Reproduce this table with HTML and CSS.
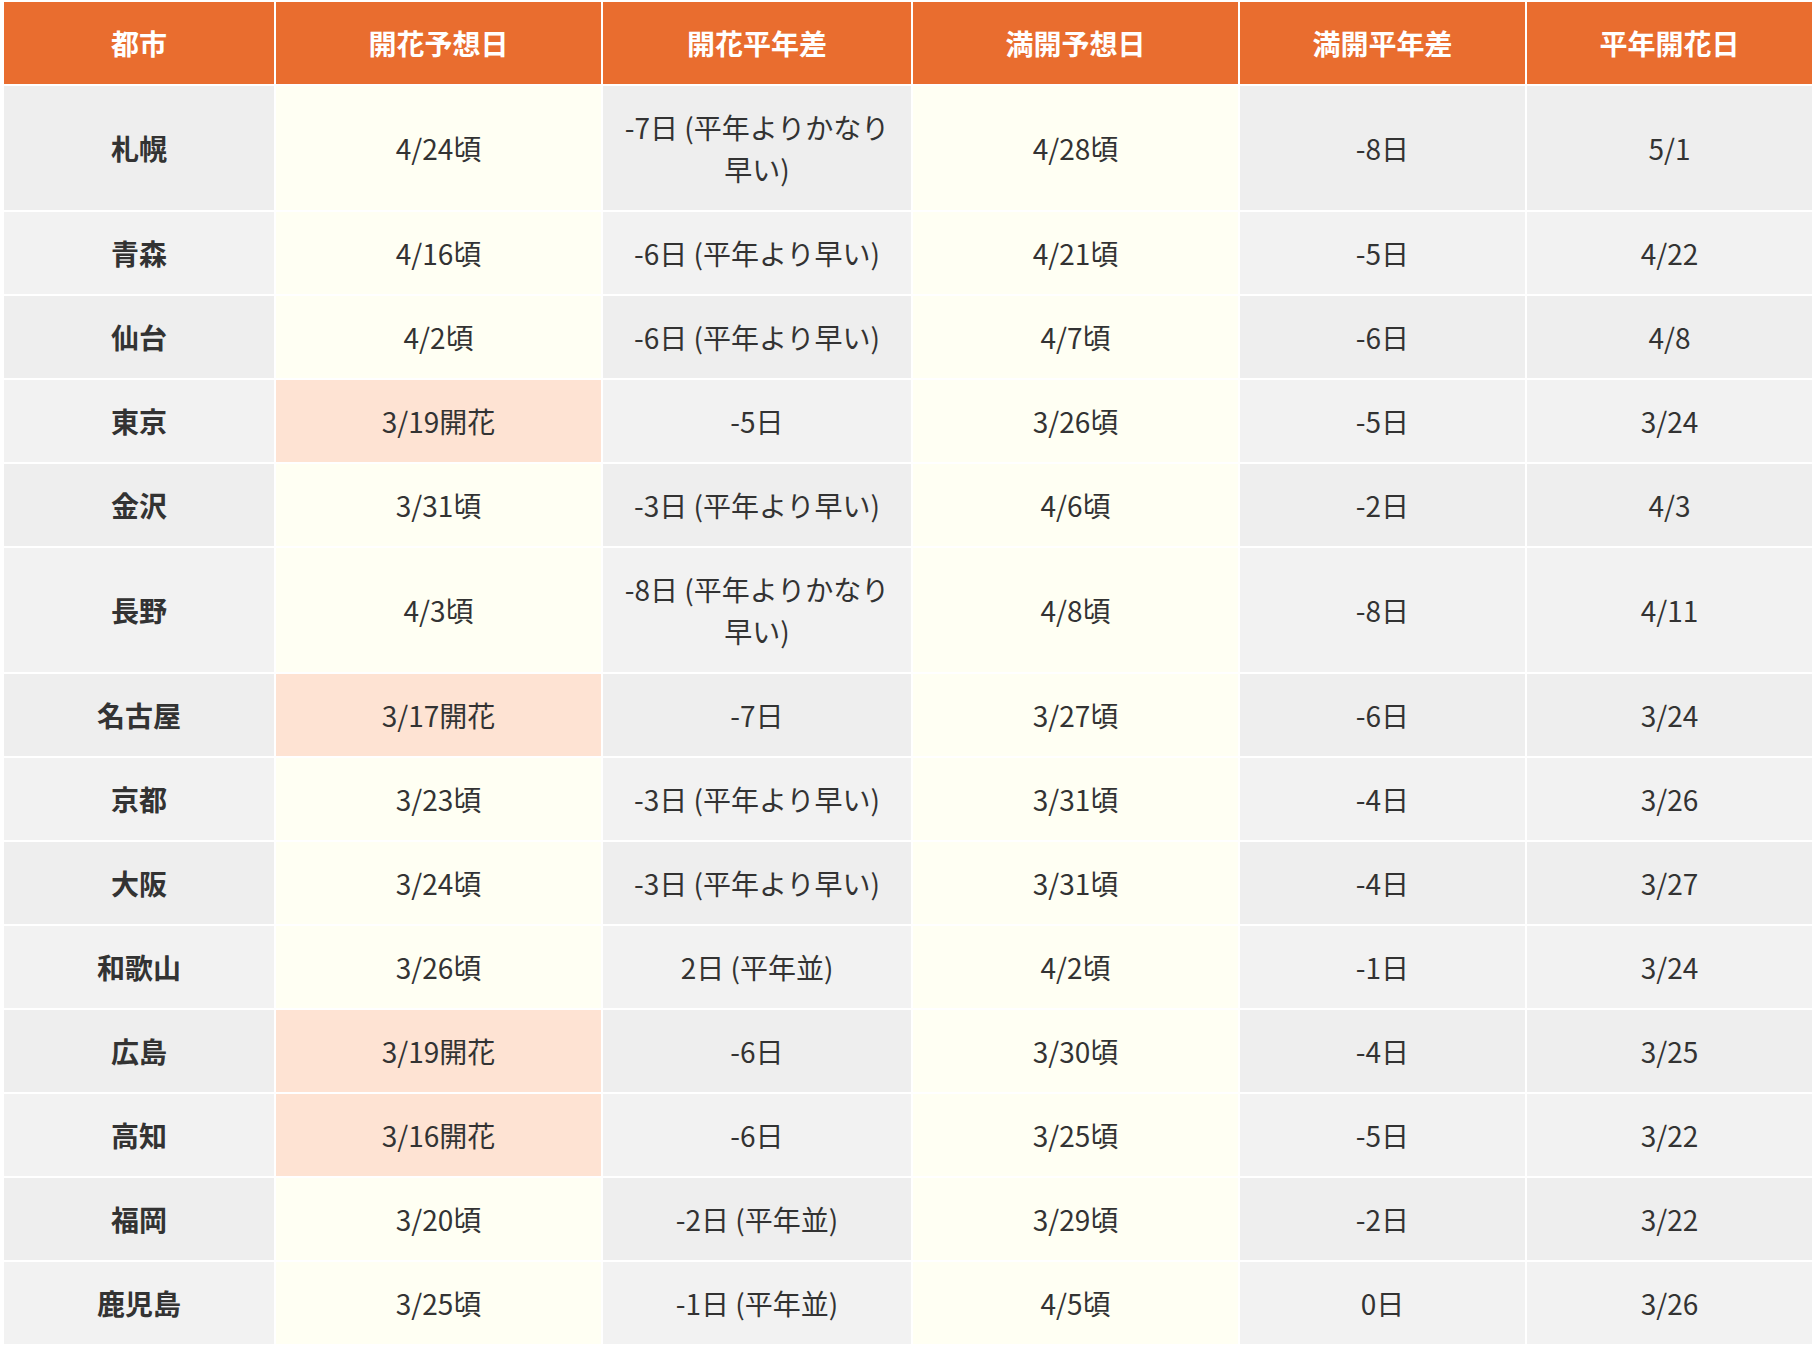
FILE: index.html
```html
<!DOCTYPE html>
<html lang="ja">
<head>
<meta charset="utf-8">
<title>桜の開花予想</title>
<link rel="stylesheet" href="styles.css">
</head>
<body>
<table class="sakura">
  <colgroup>
    <col class="c-city">
    <col class="c-wide">
    <col class="c-diff">
    <col class="c-wide">
    <col class="c-narrow">
    <col class="c-narrow">
  </colgroup>
  <thead>
    <tr>
      <th>都市</th>
      <th>開花予想日</th>
      <th>開花平年差</th>
      <th>満開予想日</th>
      <th>満開平年差</th>
      <th>平年開花日</th>
    </tr>
  </thead>
  <tbody>
    <tr><td class="city">札幌</td><td class="cream">4/24頃</td><td>-7日 (平年よりかなり早い)</td><td class="cream">4/28頃</td><td>-8日</td><td>5/1</td></tr>
    <tr><td class="city">青森</td><td class="cream">4/16頃</td><td>-6日 (平年より早い)</td><td class="cream">4/21頃</td><td>-5日</td><td>4/22</td></tr>
    <tr><td class="city">仙台</td><td class="cream">4/2頃</td><td>-6日 (平年より早い)</td><td class="cream">4/7頃</td><td>-6日</td><td>4/8</td></tr>
    <tr><td class="city">東京</td><td class="bloom">3/19開花</td><td>-5日</td><td class="cream">3/26頃</td><td>-5日</td><td>3/24</td></tr>
    <tr><td class="city">金沢</td><td class="cream">3/31頃</td><td>-3日 (平年より早い)</td><td class="cream">4/6頃</td><td>-2日</td><td>4/3</td></tr>
    <tr><td class="city">長野</td><td class="cream">4/3頃</td><td>-8日 (平年よりかなり早い)</td><td class="cream">4/8頃</td><td>-8日</td><td>4/11</td></tr>
    <tr><td class="city">名古屋</td><td class="bloom">3/17開花</td><td>-7日</td><td class="cream">3/27頃</td><td>-6日</td><td>3/24</td></tr>
    <tr><td class="city">京都</td><td class="cream">3/23頃</td><td>-3日 (平年より早い)</td><td class="cream">3/31頃</td><td>-4日</td><td>3/26</td></tr>
    <tr><td class="city">大阪</td><td class="cream">3/24頃</td><td>-3日 (平年より早い)</td><td class="cream">3/31頃</td><td>-4日</td><td>3/27</td></tr>
    <tr><td class="city">和歌山</td><td class="cream">3/26頃</td><td>2日 (平年並)</td><td class="cream">4/2頃</td><td>-1日</td><td>3/24</td></tr>
    <tr><td class="city">広島</td><td class="bloom">3/19開花</td><td>-6日</td><td class="cream">3/30頃</td><td>-4日</td><td>3/25</td></tr>
    <tr><td class="city">高知</td><td class="bloom">3/16開花</td><td>-6日</td><td class="cream">3/25頃</td><td>-5日</td><td>3/22</td></tr>
    <tr><td class="city">福岡</td><td class="cream">3/20頃</td><td>-2日 (平年並)</td><td class="cream">3/29頃</td><td>-2日</td><td>3/22</td></tr>
    <tr><td class="city">鹿児島</td><td class="cream">3/25頃</td><td>-1日 (平年並)</td><td class="cream">4/5頃</td><td>0日</td><td>3/26</td></tr>
  </tbody>
</table>
</body>
</html>
```
FILE: styles.css
```css
html, body {
  margin: 0;
  padding: 0;
  background: #ffffff;
}

body {
  font-family: "Noto Sans CJK JP", "Noto Sans", sans-serif;
  color: #333333;
}

.sakura {
  margin: 0 2px;
  width: calc(100% - 4px);
  table-layout: fixed;
  border-collapse: separate;
  border-spacing: 2px;
}

.c-city { width: 270px; }
.c-wide { width: 325px; }
.c-diff { width: 308px; }
.c-narrow { width: 285px; }

.sakura th,
.sakura td {
  box-sizing: border-box;
  padding: 20px 16px;
  font-size: 28px;
  line-height: 42px;
  text-align: center;
  vertical-align: middle;
}

.sakura th {
  background: #e96d2f;
  color: #ffffff;
  font-weight: 700;
}

.sakura td {
  font-weight: 400;
  background: #eeeeee;
}

.sakura tbody tr:nth-child(even) td {
  background: #f2f2f2;
}

.sakura td.city {
  font-weight: 700;
}

.sakura tbody tr td.cream {
  background: #fffff3;
}

.sakura tbody tr td.bloom {
  background: #fee3d3;
}
```
